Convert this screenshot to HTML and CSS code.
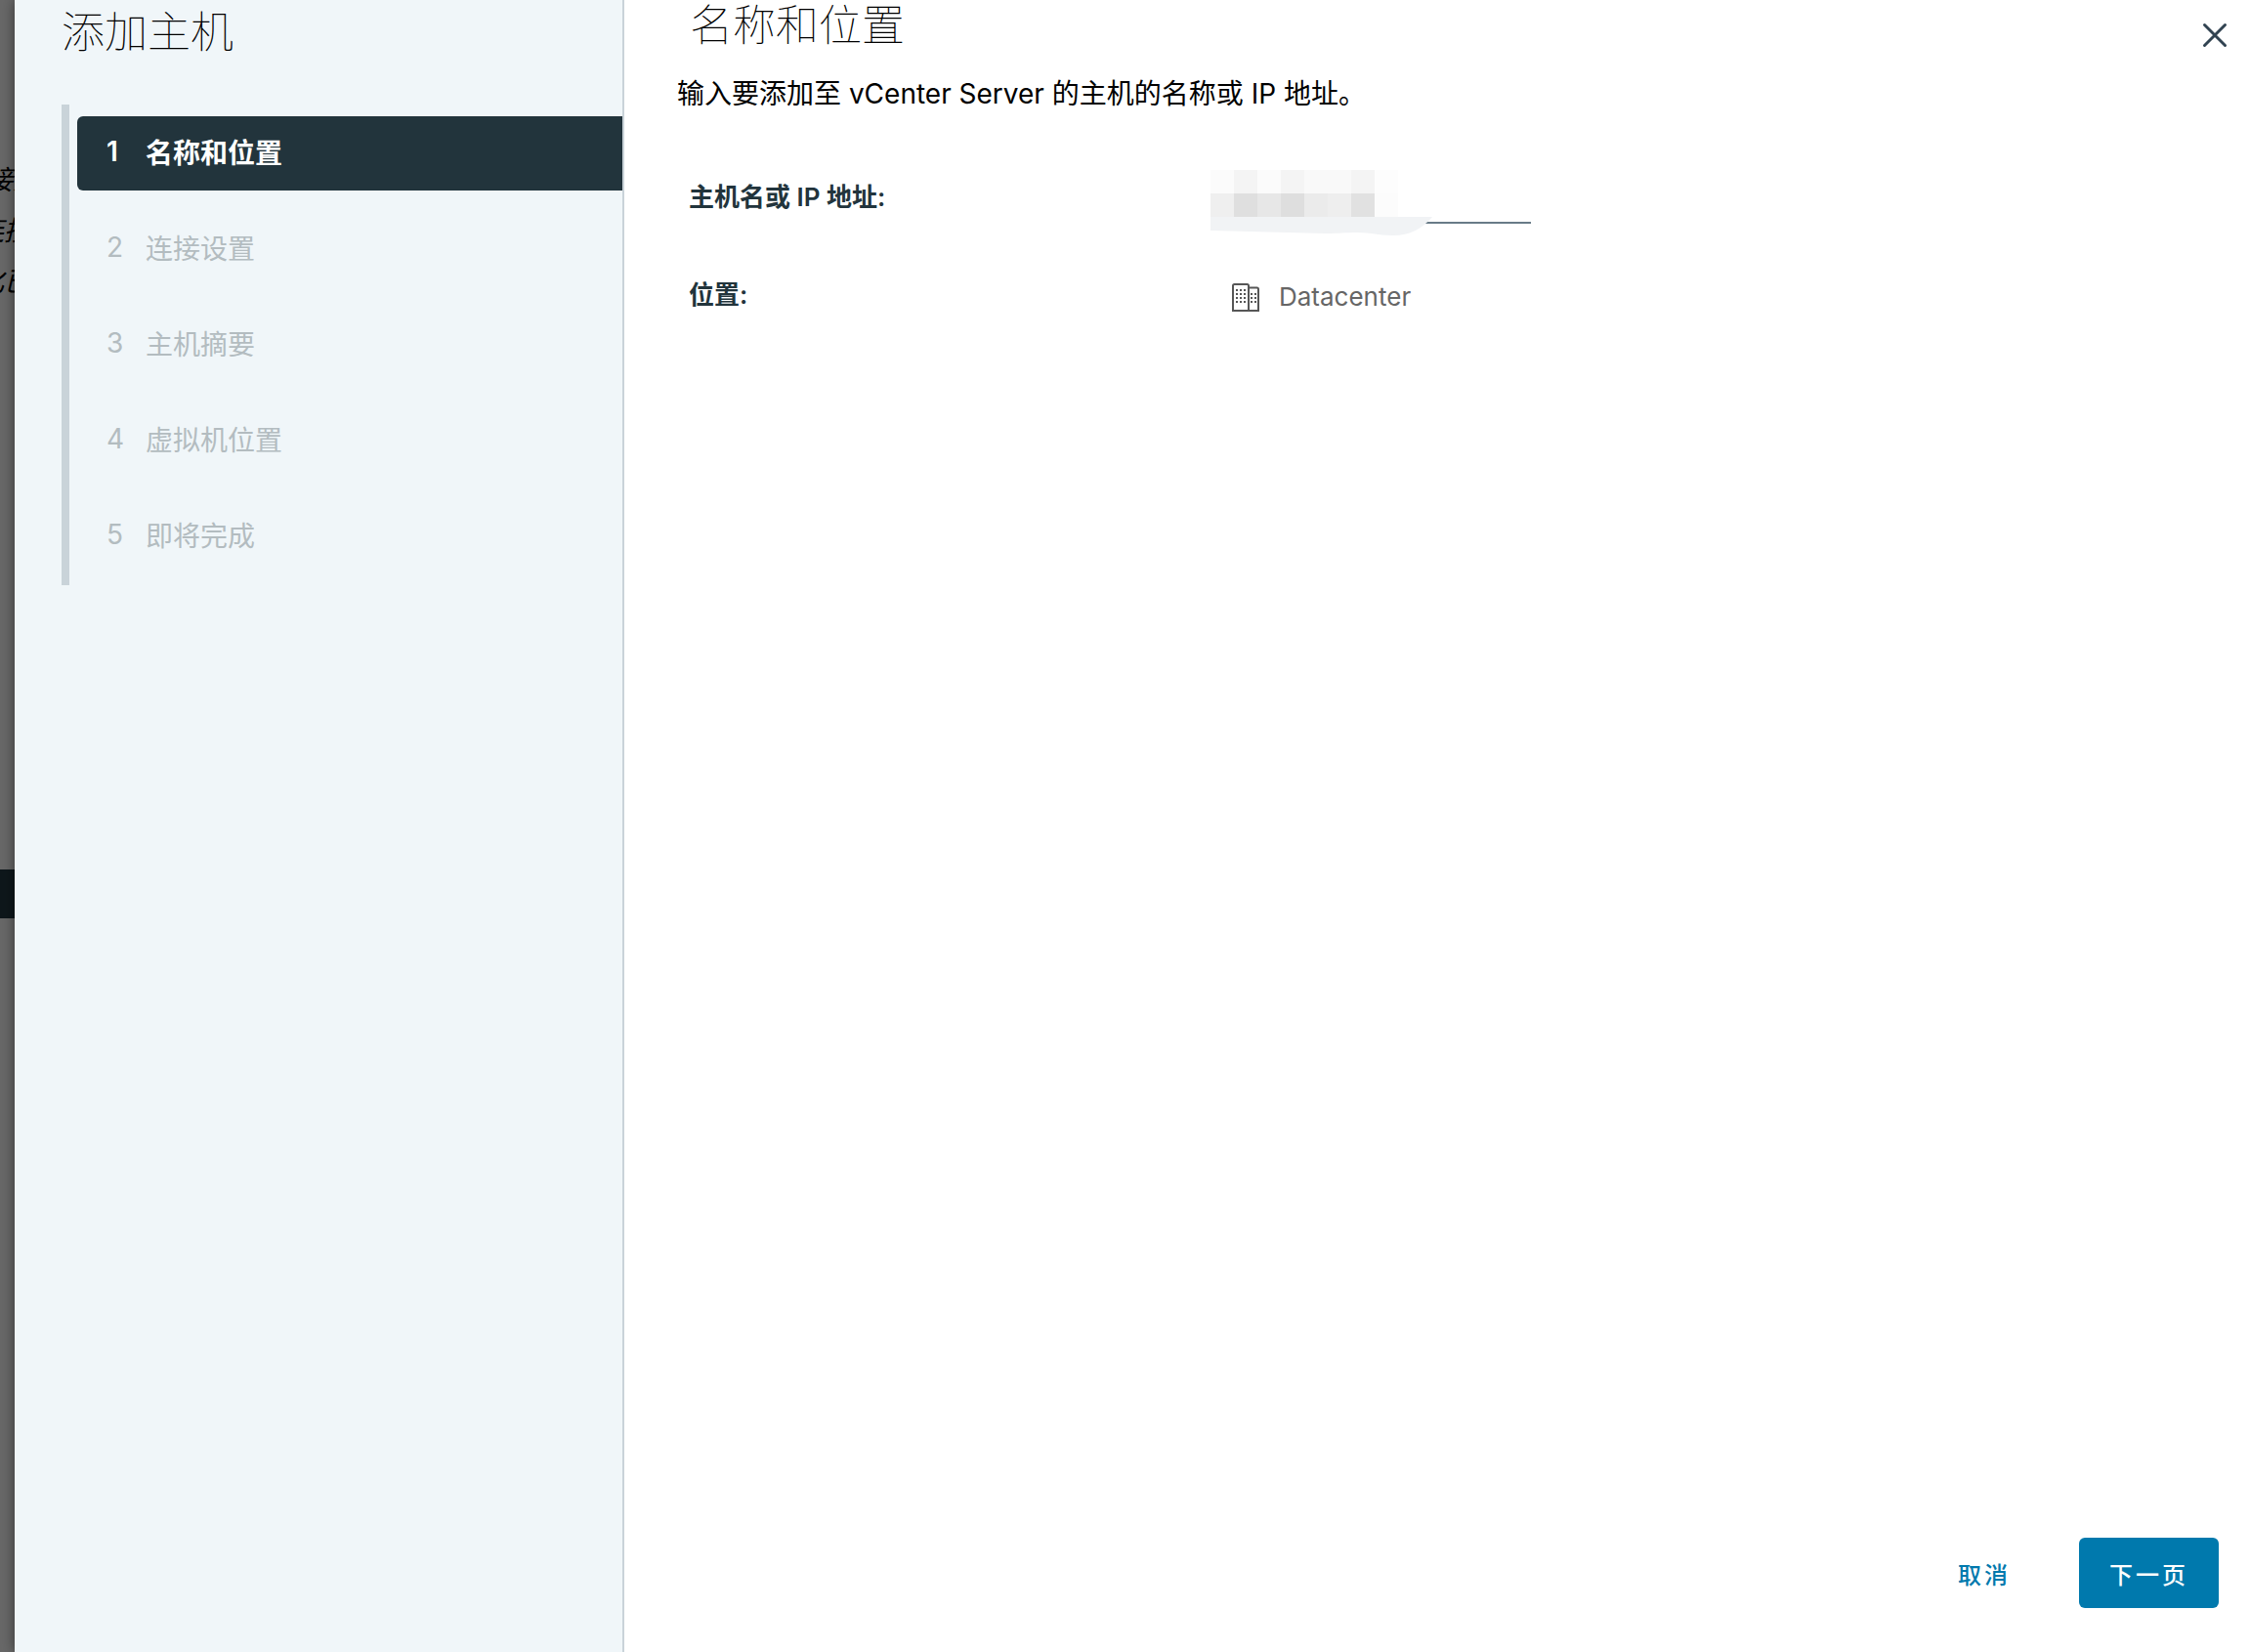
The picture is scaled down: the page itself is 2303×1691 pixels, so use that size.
FILE: index.html
```html
<!DOCTYPE html>
<html lang="zh-CN">
<head>
  <meta charset="UTF-8" />
  <title>添加主机</title>
  <link rel="stylesheet" href="styles.css">
</head>
<body>

<div class="page">
  <div class="backdrop">
    <div class="backdrop-text">
      <p class="outdent">接入</p>
      <p>连接</p>
      <p>化已</p>
    </div>
    <div class="backdrop-bar"></div>
  </div>

  <div class="wizard">
    <nav class="sidebar">
      <h1>添加主机</h1>
      <ol class="steps">
        <li><button class="step active"><span class="num">1</span>名称和位置</button></li>
        <li><button class="step" disabled><span class="num">2</span>连接设置</button></li>
        <li><button class="step" disabled><span class="num">3</span>主机摘要</button></li>
        <li><button class="step" disabled><span class="num">4</span>虚拟机位置</button></li>
        <li><button class="step" disabled><span class="num">5</span>即将完成</button></li>
      </ol>
    </nav>

    <main class="content">
      <header>
        <h2>名称和位置</h2>
        <button class="close" aria-label="关闭">
          <svg width="28" height="28" viewBox="0 0 28 28" fill="none" stroke="#314351" stroke-width="3" stroke-linecap="round">
            <path d="M3.5 3.5l21 21M24.5 3.5l-21 21" />
          </svg>
        </button>
      </header>

      <p class="intro">输入要添加至 vCenter Server 的主机的名称或 IP 地址。</p>

      <form class="form">
        <label for="hostname">主机名或 IP 地址:</label>
        <div class="field">
          <input type="text" id="hostname">
          <svg class="mask" width="232" height="68" viewBox="0 0 232 68" shape-rendering="crispEdges">
            <rect x="0" y="0" width="24" height="24" fill="#fbfbfb" />
            <rect x="24" y="0" width="24" height="24" fill="#f4f4f4" />
            <rect x="48" y="0" width="24" height="24" fill="#fbfbfb" />
            <rect x="72" y="0" width="24" height="24" fill="#f4f4f4" />
            <rect x="96" y="0" width="48" height="24" fill="#f9f9f9" />
            <rect x="144" y="0" width="24" height="24" fill="#f4f4f4" />
            <rect x="168" y="0" width="24" height="24" fill="#fdfdfd" />
            <rect x="0" y="24" width="24" height="24" fill="#efefef" />
            <rect x="24" y="24" width="24" height="24" fill="#dfdfdf" />
            <rect x="48" y="24" width="24" height="24" fill="#e7e7e7" />
            <rect x="72" y="24" width="24" height="24" fill="#dedede" />
            <rect x="96" y="24" width="24" height="24" fill="#ebebeb" />
            <rect x="120" y="24" width="24" height="24" fill="#eeeeee" />
            <rect x="144" y="24" width="24" height="24" fill="#e1e1e1" />
            <rect x="168" y="24" width="24" height="24" fill="#fcfcfc" />
            <path d="M0 48H227C217 60 204 67 187 67C170 67 166 64 150 64C138 64 132 65 118 65L0 62Z" fill="#f1f3f5" shape-rendering="auto" />
          </svg>
        </div>

        <span class="label">位置:</span>
        <div class="location">
          <svg width="28" height="30" viewBox="0 0 28 30" fill="none" stroke="#565656" stroke-width="2">
            <path d="M1 29V3.5Q1 2 2.5 2H15.5Q17 2 17 3.5V29ZM17 5.500H25.500Q27 5.500 27 7V29H17" />
            <path d="M4 8H15M4 12H15M4 16H15M4 20H15M19 12H25M19 16H25M19 20H25" stroke-dasharray="2 2" />
          </svg>
          Datacenter
        </div>
      </form>

      <footer>
        <button class="btn-link">取消</button>
        <button class="btn-primary">下一页</button>
      </footer>
    </main>
  </div>
</div>

</body>
</html>
```
FILE: styles.css
```css
* {
  box-sizing: border-box;
}

body {
  margin: 0;
  font-family: Inter, "Noto Sans CJK SC", sans-serif;
  font-size: 28px;
  line-height: 36px;
  color: #000;
}

h1, h2, p {
  margin: 0;
}

button {
  font-family: inherit;
  border: none;
  background: none;
  padding: 0;
  cursor: pointer;
}

.page {
  display: flex;
  min-height: 100vh;
  background: #686868;
}

/* strip of the dimmed page left of the wizard */
.backdrop {
  width: 15px;
  overflow: hidden;
  white-space: nowrap;
  font-size: 28px;
  font-style: italic;
  line-height: 52px;
}

.backdrop-text {
  height: 890px;
  padding-top: 158px;
  margin-left: -24px;
}

.backdrop-text .outdent {
  padding-left: 9px;
}

.backdrop-bar {
  height: 50px;
  background: #0e171b;
}

.wizard {
  display: flex;
  flex: 1;
  background: #fff;
  box-shadow: 0 0 12px rgba(0, 0, 0, 0.5);
}

.sidebar {
  width: 624px;
  padding: 0 0 0 48px;
  background: #f0f6f9;
  border-right: 2px solid #c9d3d9;
}

h1, h2 {
  font-size: 44px;
  font-weight: 100;
  line-height: 66px;
}

.steps {
  list-style: none;
  margin: 41px 0 0;
  padding: 12px 0 12px 8px;
  border-left: 8px solid #c9d3d9;
}

.steps li + li {
  margin-top: 22px;
}

.step {
  display: flex;
  align-items: center;
  width: 100%;
  height: 76px;
  padding: 0 30px 4px;
  font-size: 28px;
  color: #b3bcc0;
  border-radius: 6px 0 0 6px;
}

.step.active {
  background: #22343c;
  color: #fff;
  font-weight: 600;
}

.num {
  width: 40px;
  text-align: left;
}

.content {
  flex: 1;
  display: flex;
  flex-direction: column;
  padding: 0 22px 45px 54px;
}

header {
  display: flex;
  justify-content: space-between;
  align-items: flex-start;
}

h2 {
  padding-left: 13px;
  line-height: 52px;
}

.close {
  display: flex;
  margin-top: 22px;
}

.intro {
  margin-top: 26px;
}

.form {
  display: grid;
  grid-template-columns: 534px 1fr;
  align-items: start;
  row-gap: 20px;
  margin: 60px 0 0 12px;
  font-size: 26px;
}

label, .label {
  padding-top: 10px;
  color: #22343c;
  font-weight: 600;
}

.label {
  padding-top: 22px;
}

.field {
  position: relative;
  height: 68px;
}

.field input {
  width: 328px;
  height: 55px;
  padding: 0 12px;
  font: inherit;
  border: none;
  border-bottom: 2px solid #687b87;
  outline: none;
}

.mask {
  position: absolute;
  left: 0;
  top: 0;
}

.location {
  display: flex;
  align-items: center;
  gap: 20px;
  padding: 24px 0 0 22px;
  color: #666;
}

footer {
  display: flex;
  justify-content: flex-end;
  align-items: center;
  gap: 70px;
  margin-top: auto;
  padding-right: 10px;
}

.btn-link, .btn-primary {
  height: 72px;
  font-size: 24px;
  font-weight: 500;
  letter-spacing: 3px;
}

.btn-link {
  color: #0079ad;
}

.btn-primary {
  padding: 0 31px;
  background: #0079ad;
  color: #fff;
  border-radius: 6px;
}
```
